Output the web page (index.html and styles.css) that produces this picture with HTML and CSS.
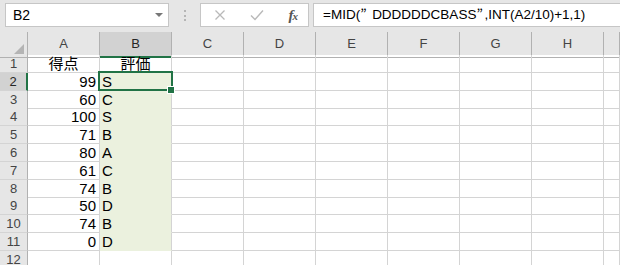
FILE: index.html
```html
<!DOCTYPE html>
<html>
<head>
	<meta charset="UTF-8">
	<title>評価</title>
	<link rel="stylesheet" href="styles.css">
</head>
<body>
	<div class="toolbar">
		<div class="namebox">
			<span>B2</span>
			<span class="caret"></span>
		</div>
		<div class="grip"></div>
		<div class="fxbox">
			<svg class="icon" width="12" height="12" viewBox="0 0 12 12">
				<path d="M1.5,1.5L10.5,10.5M10.5,1.5L1.5,10.5" style="fill:none;stroke:#b9b9b9;stroke-width:1.3px"></path>
			</svg>
			<svg class="icon" width="14" height="12" viewBox="0 0 14 12">
				<path d="M1,6.5L5,10.5L13,1.5" style="fill:none;stroke:#b9b9b9;stroke-width:1.4px"></path>
			</svg>
			<span class="fx">f<small>x</small></span>
		</div>
		<div class="formula">=MID(<span class="q">”</span>DDDDDDCBASS<span class="q q2">”</span>,INT(A2/10)+1,1)</div>
	</div>

	<div class="sheet">
		<div class="row head">
			<div class="corner"><span class="tri"></span></div>
			<div>A</div><div class="sel">B</div><div>C</div><div>D</div><div>E</div><div>F</div><div>G</div><div>H</div><div></div>
		</div>
		<div class="row">
			<div class="num">1</div>
			<div class="mid">得点</div><div class="mid">評価</div><div></div><div></div><div></div><div></div><div></div><div></div><div></div>
		</div>
		<div class="row">
			<div class="num sel">2</div>
			<div class="val">99</div><div class="fill active">S</div><div></div><div></div><div></div><div></div><div></div><div></div><div></div>
		</div>
		<div class="row">
			<div class="num">3</div>
			<div class="val">60</div><div class="fill">C</div><div></div><div></div><div></div><div></div><div></div><div></div><div></div>
		</div>
		<div class="row">
			<div class="num">4</div>
			<div class="val">100</div><div class="fill">S</div><div></div><div></div><div></div><div></div><div></div><div></div><div></div>
		</div>
		<div class="row">
			<div class="num">5</div>
			<div class="val">71</div><div class="fill">B</div><div></div><div></div><div></div><div></div><div></div><div></div><div></div>
		</div>
		<div class="row">
			<div class="num">6</div>
			<div class="val">80</div><div class="fill">A</div><div></div><div></div><div></div><div></div><div></div><div></div><div></div>
		</div>
		<div class="row">
			<div class="num">7</div>
			<div class="val">61</div><div class="fill">C</div><div></div><div></div><div></div><div></div><div></div><div></div><div></div>
		</div>
		<div class="row">
			<div class="num">8</div>
			<div class="val">74</div><div class="fill">B</div><div></div><div></div><div></div><div></div><div></div><div></div><div></div>
		</div>
		<div class="row">
			<div class="num">9</div>
			<div class="val">50</div><div class="fill">D</div><div></div><div></div><div></div><div></div><div></div><div></div><div></div>
		</div>
		<div class="row">
			<div class="num">10</div>
			<div class="val">74</div><div class="fill">B</div><div></div><div></div><div></div><div></div><div></div><div></div><div></div>
		</div>
		<div class="row">
			<div class="num">11</div>
			<div class="val">0</div><div class="fill">D</div><div></div><div></div><div></div><div></div><div></div><div></div><div></div>
		</div>
		<div class="row">
			<div class="num">12</div>
			<div></div><div></div><div></div><div></div><div></div><div></div><div></div><div></div><div></div>
		</div>
	</div>
</body>
</html>
```

FILE: styles.css
```css
:root {
	--bar-color: #e6e6e6;
	--head-color: #e6e6e6;
	--head-sel: #d2d2d2;
	--grid-color: #d4d4d4;
	--head-line: #b1b1b1;
	--green: #217346;
	--fill-color: #ebf1de;
}
* {
	box-sizing: border-box;
}
body {
	margin: 0;
	padding: 0;
	width: 620px;
	height: 265px;
	overflow: hidden;
	background: #fff;
	font-family: "Liberation Sans", "Noto Sans CJK JP", sans-serif;
	color: #000;
}
.toolbar {
	background: var(--bar-color);
	height: 32px;
	padding: 3px 0 0 5px;
	display: flex;
	align-items: flex-start;
}
.namebox {
	flex: 0 0 164px;
	background: #fff;
	border: 1px solid #c6c6c6;
	height: 24px;
	display: flex;
	align-items: center;
	justify-content: space-between;
	padding: 0 5px 0 7px;
	font-size: 14px;
}
.caret {
	width: 0;
	height: 0;
	border-left: 4px solid transparent;
	border-right: 4px solid transparent;
	border-top: 4px solid #777;
}
.grip {
	flex: 0 0 31px;
	height: 24px;
	display: flex;
	justify-content: center;
	padding-top: 7px;
}
.grip::before {
	content: "";
	width: 2px;
	height: 11px;
	background: repeating-linear-gradient(#b5b5b5 0 2px, transparent 2px 4.5px);
}
.fxbox {
	flex: 0 0 109px;
	background: #fff;
	border: 1px solid #c6c6c6;
	height: 24px;
	display: flex;
	align-items: center;
	justify-content: space-between;
	padding: 0 11px 0 13px;
}
.fx {
	font-family: "Liberation Serif", serif;
	font-style: italic;
	font-weight: bold;
	font-size: 15px;
	color: #555;
	letter-spacing: -1px;
}
.fx small {
	font-size: 11px;
}
.formula {
	flex: 1;
	min-width: 0;
	overflow: hidden;
	background: #fff;
	border: 1px solid #c6c6c6;
	border-right: none;
	height: 24px;
	margin-left: 4px;
	padding-left: 9px;
	font-size: 13.5px;
	line-height: 22px;
	white-space: nowrap;
}
.q {
	font-family: "Noto Sans CJK JP", sans-serif;
	display: inline-block;
	width: 12px;
	line-height: 1;
}
.q2 {
	width: 8px;
}
.row {
	display: grid;
	grid-template-columns: 28px repeat(8, 72px) 1fr;
	height: 17.8px;
	font-size: 15px;
	line-height: 17px;
}
.row > div {
	border-right: 1px solid var(--grid-color);
	border-bottom: 1px solid var(--grid-color);
	white-space: nowrap;
}
.row.head {
	height: 23px;
	background: var(--head-color);
	font-size: 13px;
	color: #444;
	line-height: 24px;
}
.row.head > div {
	text-align: center;
	border-right-color: var(--head-line);
	border-bottom-color: var(--head-line);
}
.row.head > .sel {
	background: var(--head-sel);
	border-bottom: 2px solid var(--green);
	color: #262626;
}
.corner {
	position: relative;
}
.tri {
	position: absolute;
	right: 3px;
	bottom: 3px;
	width: 0;
	height: 0;
	border-left: 10px solid transparent;
	border-bottom: 10px solid #b4b4b4;
}
.row > .num {
	background: var(--head-color);
	border-right-color: var(--head-line);
	text-align: center;
	font-size: 13px;
	color: #444;
}
.row > .num.sel {
	background: var(--head-sel);
	border-right: 2px solid var(--green);
	color: #262626;
}
.mid {
	text-align: center;
}
.val {
	text-align: right;
	padding-right: 3px;
}
.row > .fill {
	background: var(--fill-color);
	border-bottom-color: var(--fill-color);
	padding-left: 2px;
}
.active {
	position: relative;
}
.active::before {
	content: "";
	position: absolute;
	left: -2px;
	top: -2px;
	right: -2px;
	bottom: -1px;
	border: 2px solid var(--green);
}
.active::after {
	content: "";
	position: absolute;
	right: -4px;
	bottom: -4px;
	width: 6px;
	height: 6px;
	background: var(--green);
	border: 1px solid #fff;
}
```
